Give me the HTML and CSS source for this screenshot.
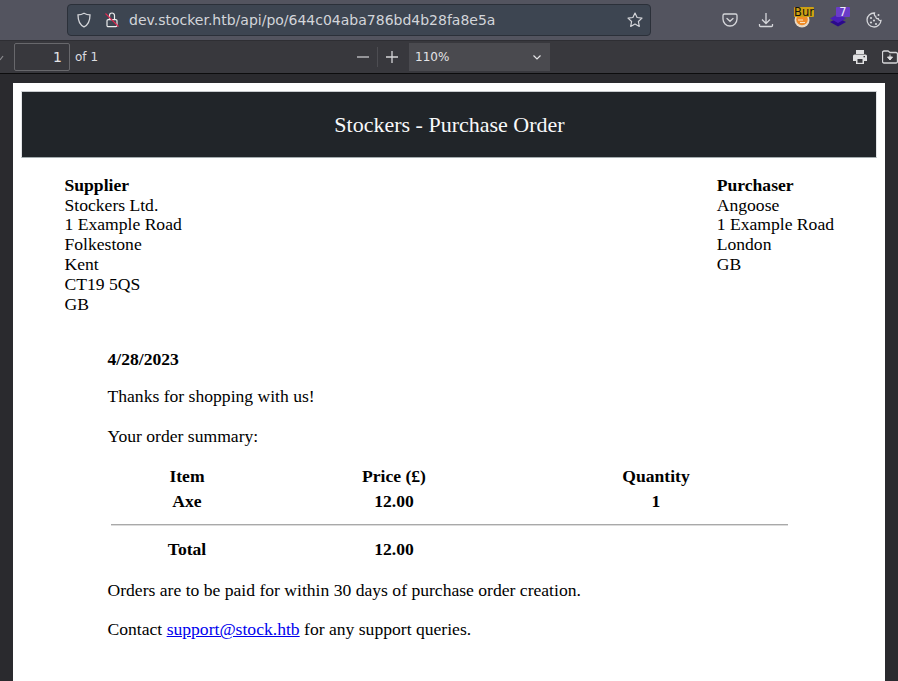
FILE: index.html
```html
<!DOCTYPE html>
<html>
<head>
<meta charset="UTF-8">
<title>Purchase Order</title>
<link rel="stylesheet" href="styles.css">
</head>
<body>

<div class="navbar">
  <div class="urlbar">
    <svg class="shield" width="16" height="16" viewBox="0 0 16 16"><path d="M8 1.200c2 1.100 4 1.600 6 1.700 0 5-1 9.500-6 11.900C3 12.400 2 7.900 2 2.900c2-.1 4-.6 6-1.700z" fill="none" stroke="#d5d6da" stroke-width="1.300"/></svg>
    <svg class="lock" width="16" height="16" viewBox="0 0 16 16">
      <path d="M5.500 7V3.500a2.500 2.500 0 0 1 5 0V7" fill="none" stroke="#eceded" stroke-width="1.200"/>
      <rect x="3" y="7.600" width="10" height="7" rx="1.200" fill="none" stroke="#eceded" stroke-width="1.200"/>
      <path d="M1.500 1.500L14.500 14.500" stroke="#e22850" stroke-width="1.100"/>
    </svg>
    <span class="url">dev.stocker.htb/api/po/644c04aba786bd4b28fa8e5a</span>
    <svg class="star" width="16" height="16" viewBox="0 0 16 16"><path d="M8 1l2.100 4.500 4.900.6-3.600 3.400.9 4.900L8 12l-4.300 2.400.9-4.900L1 6.100l4.900-.6z" fill="none" stroke="#d5d6da" stroke-width="1.200" stroke-linejoin="round"/></svg>
  </div>
  <div class="tools">
    <svg width="16" height="16" viewBox="0 0 16 16"><path d="M2.500 2h11A1.500 1.500 0 0 1 15 3.500V7A7 7 0 0 1 1 7V3.500A1.500 1.500 0 0 1 2.500 2z" fill="none" stroke="#d5d6da" stroke-width="1.300"/><path d="M5 6.500l3 2.800 3-2.800" fill="none" stroke="#d5d6da" stroke-width="1.300" stroke-linecap="round"/></svg>
    <svg width="16" height="16" viewBox="0 0 16 16"><path d="M8 1v10M4 7.500L8 11.500l4-4M1.500 12v1.500a1 1 0 0 0 1 1h11a1 1 0 0 0 1-1V12" fill="none" stroke="#d5d6da" stroke-width="1.300"/></svg>
    <div class="ext">
      <svg class="ext-icon" width="16" height="16" viewBox="0 0 16 16"><circle cx="8" cy="8" r="7.500" fill="#e8d9c4"/><circle cx="8" cy="7.500" r="5.800" fill="#f08c28"/><path d="M4 8h5M6 10.500h5" stroke="#fbe3c0" stroke-width="1"/></svg>
      <span class="badge badge-burp">Bur</span>
    </div>
    <div class="ext">
      <svg class="ext-icon" width="16" height="16" viewBox="0 0 16 16"><path d="M8 6l8 4-8 4.500-8-4.500z" fill="#2b0a8c"/><path d="M8 2l8 4.500-8 4.500-8-4.500z" fill="#4a1fb8"/></svg>
      <span class="badge badge-layers">7</span>
    </div>
    <svg width="16" height="16" viewBox="0 0 16 16"><path d="M8.500 1A7 7 0 1 0 15 8.500c-1.500.3-2.500-.5-2.700-1.800-1.400.2-2.700-.8-2.600-2.300C8.600 4.200 8 2.500 8.500 1z" fill="none" stroke="#d5d6da" stroke-width="1.300"/><circle cx="5" cy="6" r="1.100" fill="#d5d6da"/><circle cx="8" cy="8.500" r="1.100" fill="#d5d6da"/><circle cx="5" cy="10.500" r="1.100" fill="#d5d6da"/><circle cx="10" cy="12" r="1.100" fill="#d5d6da"/><circle cx="12.500" cy="3" r="1" fill="#d5d6da"/></svg>
  </div>
</div>

<div class="pdfbar">
  <div class="page-num">
    <svg class="chev-cut" width="6" height="8" viewBox="0 0 6 8"><path d="M0 7l3-4" stroke="#8a8a8e" stroke-width="1.200" fill="none"/></svg>
    <span class="page-input">1</span>
    <span class="page-of">of 1</span>
  </div>
  <div class="zoom-tools">
    <svg width="14" height="14" viewBox="0 0 14 14"><path d="M1 7h12" stroke="#c9c9cc" stroke-width="1.300"/></svg>
    <span class="zoom-sep"></span>
    <svg width="14" height="14" viewBox="0 0 14 14"><path d="M1 7h12M7 1v12" stroke="#d5d5d8" stroke-width="1.300"/></svg>
    <div class="zoom-select">
      <span>110%</span>
      <svg width="10" height="10" viewBox="0 0 10 10"><path d="M1.500 3.500L5 7l3.500-3.500" stroke="#e6e6e8" stroke-width="1.200" fill="none"/></svg>
    </div>
  </div>
  <div class="pdf-actions">
    <svg width="16" height="16" viewBox="0 0 16 16"><path d="M4 1h8v4H4zM2.500 5.500h11A1.500 1.500 0 0 1 15 7v5h-3v3H4v-3H1V7a1.500 1.500 0 0 1 1.500-1.500z" fill="#e0e0e2"/><rect x="5.500" y="10" width="5" height="3.800" fill="#38383d"/><rect x="11.500" y="7" width="1.500" height="1.300" fill="#38383d"/></svg>
    <svg width="16" height="16" viewBox="0 0 16 16"><path d="M6 2H2a1.500 1.500 0 0 0-1.500 1.500v9A1.500 1.500 0 0 0 2 14h12a1.500 1.500 0 0 0 1.500-1.500V5a1.500 1.500 0 0 0-1.500-1.500H8z" fill="none" stroke="#d5d5d8" stroke-width="1.300"/><path d="M8 5.500v5M5.500 8L8 11l2.500-3z" fill="#e0e0e2" stroke="#e0e0e2"/></svg>
  </div>
</div>

<div class="viewer">
  <div class="page">
    <div class="po-header">Stockers - Purchase Order</div>

    <div class="addresses">
      <div class="address">
        <b>Supplier</b><br>
        Stockers Ltd.<br>
        1 Example Road<br>
        Folkestone<br>
        Kent<br>
        CT19 5QS<br>
        GB
      </div>
      <div class="address">
        <b>Purchaser</b><br>
        Angoose<br>
        1 Example Road<br>
        London<br>
        GB
      </div>
    </div>

    <div class="letter">
      <p class="date"><b>4/28/2023</b></p>
      <p>Thanks for shopping with us!</p>
      <p>Your order summary:</p>

      <table class="items">
        <tr><th class="col-item">Item</th><th class="col-price">Price (£)</th><th>Quantity</th></tr>
        <tr><th>Axe</th><th>12.00</th><th>1</th></tr>
        <tr><td colspan="3" class="rule-cell"><hr></td></tr>
        <tr><th>Total</th><th>12.00</th><th></th></tr>
      </table>

      <p>Orders are to be paid for within 30 days of purchase order creation.</p>
      <p>Contact <a href="#">support@stock.htb</a> for any support queries.</p>
    </div>
  </div>
</div>

</body>
</html>
```
FILE: styles.css
```css
html, body { margin: 0; padding: 0; height: 100%; overflow: hidden; }
body { background: #2a2a2e; font-family: "DejaVu Sans", sans-serif; display: flex; flex-direction: column; }

/* browser chrome */
.navbar { height: 40px; background: #53545f; display: flex; align-items: center; flex-shrink: 0; box-sizing: border-box; padding-left: 67px; }
.urlbar { width: 584px; height: 32px; box-sizing: border-box; background: #3d4551; border: 1px solid #2b3039; border-radius: 4px; display: flex; align-items: center; padding: 0 7px 0 8px; }
.shield { margin-right: 12px; }
.lock { margin-right: 9px; }
.url { color: #d3d5da; font-size: 14px; flex: 1; white-space: nowrap; }
.tools { display: flex; align-items: center; gap: 20px; margin-left: 71px; }
.ext { position: relative; width: 16px; height: 16px; }
.badge { position: absolute; top: -5px; height: 10px; line-height: 11px; font-size: 11.500px; text-align: center; border-radius: 1px; }
.badge-burp { left: 0; width: 20px; background: #cda012; color: #111; }
.badge-layers { left: 6px; width: 14px; background: #6a3cc8; color: #f0ecfa; }

/* pdf toolbar */
.pdfbar { background: #38383d; border-top: 1px solid #2e2e33; border-bottom: 1px solid #0c0c0d; box-sizing: border-box; height: 34px; display: flex; align-items: center; flex-shrink: 0; color: #e4e4e6; font-size: 12px; }
.page-num { display: flex; align-items: center; width: 351px; }
.chev-cut { margin-right: 8px; }
.page-input { width: 47px; height: 26px; line-height: 26px; border: 1px solid #68686c; border-radius: 2px; text-align: right; padding-right: 7px; margin-right: 5px; font-size: 14px; }
.page-of { color: #dcdce0; }
.zoom-tools { display: flex; align-items: center; margin-left: 5px; }
.zoom-sep { width: 1px; height: 20px; background: #4d4d52; margin: 0 7px 0 7px; }
.zoom-select { margin-left: 10px; width: 141px; height: 28px; box-sizing: border-box; background: #4a4a4f; display: flex; align-items: center; justify-content: space-between; padding: 0 8px 0 6px; }
.pdf-actions { display: flex; gap: 14px; margin-left: 302px; }

/* pdf page */
.viewer { flex: 1; padding: 9px 13px 0; overflow: hidden; }
.page { background: #fff; height: 100%; padding: 9px 8px 0 9px; color: #000; font-family: "Liberation Serif", serif; font-size: 17.600px; line-height: 19.800px; }
.po-header { height: 67px; margin: -1px 0 0 -1px; padding-left: 1px; box-sizing: border-box; background: #212529; border: 1px solid #e2e4e6; border-top-color: #c8cbce; border-bottom-color: #a4adaf; color: #f8f9fa; font-size: 22px; text-align: center; line-height: 66px; }
.addresses { display: flex; justify-content: space-between; padding: 17.800px 43px 0 42.500px; }
.letter { padding: 0 89px 0 85.500px; margin-top: 35.200px; }
.letter p { margin: 0 0 19.800px; }
.letter .date { margin-bottom: 17.800px; }
.letter a { color: #00e; }
.items { border-collapse: collapse; width: 677px; margin: -2.300px 0 19.400px 3px; table-layout: fixed; font-weight: bold; }
.items th { padding: 3px 0 2px; text-align: center; }
.col-item { width: 153px; }
.col-price { width: 261px; }
.items .rule-cell { padding: 10px 0 11px; }
.items hr { margin: 0; border: 0; border-top: 1px solid #a9a9a9; border-bottom: 1px solid #dcdcdc; }
```
